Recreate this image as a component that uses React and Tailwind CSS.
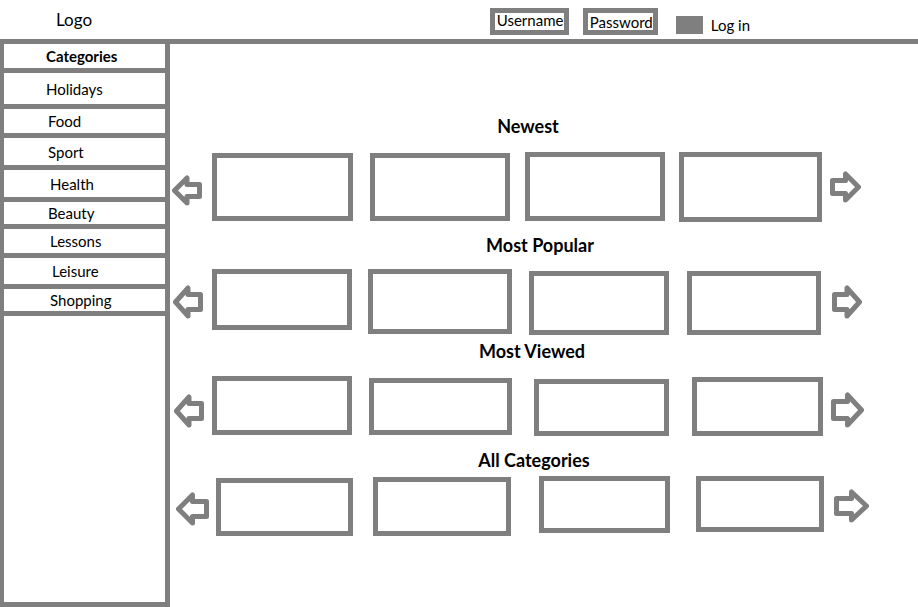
const categories = [
  { name: "Holidays", row: "h-9 pl-[42px]" },
  { name: "Food", row: "h-[29px] pl-11" },
  { name: "Sport", row: "h-8 pl-11" },
  { name: "Health", row: "h-8 pl-[46px]" },
  { name: "Beauty", row: "h-[27px] pl-11" },
  { name: "Lessons", row: "h-[29px] pl-[46px]" },
  { name: "Leisure", row: "h-[31px] pl-12" },
  { name: "Shopping", row: "h-[27px] pl-[46px]" },
];

const sections = [
  {
    title: "Newest",
    heading: "mb-3.5 pr-8",
    row: "h-[70px] grid-cols-[2fr_30fr_10fr_141fr_17fr_140fr_15fr_140fr_14fr_143fr_8fr_31fr_57fr]",
    cards: ["h-[68px]", "h-[68px]", "h-[69px] self-start", "h-[70px]"],
    left: { width: 30, height: 31, place: "self-end pb-4" },
    right: { width: 31, height: 32, place: "self-center" },
  },
  {
    title: "Most Popular",
    heading: "mt-[11px] mb-3 pr-2",
    row: "h-[66px] grid-cols-[3fr_30fr_9fr_140fr_16fr_144fr_17fr_140fr_18fr_134fr_11fr_30fr_56fr]",
    cards: ["h-[61px] self-start", "h-[65px] self-start", "h-[64px] self-end", "h-[64px] self-end"],
    left: { width: 30, height: 34, place: "self-center" },
    right: { width: 30, height: 34, place: "self-center" },
  },
  {
    title: "Most Viewed",
    heading: "mt-1 mb-[13px] pr-6",
    row: "h-[60px] grid-cols-[4fr_30fr_8fr_140fr_17fr_143fr_22fr_135fr_23fr_131fr_8fr_33fr_54fr]",
    cards: ["h-[59px] self-start", "h-[57px]", "h-[57px] self-end", "h-[59px] self-end"],
    left: { width: 30, height: 34, place: "self-end pb-2" },
    right: { width: 33, height: 36, place: "self-end pb-2" },
  },
  {
    title: "All Categories",
    heading: "mt-3 mb-1 pr-5",
    row: "h-[60px] grid-cols-[6fr_33fr_7fr_137fr_20fr_138fr_28fr_131fr_26fr_128fr_10fr_35fr_49fr]",
    cards: ["h-[58px] self-end", "h-[59px] self-end", "h-[57px] self-start", "h-[56px] self-start"],
    left: { width: 33, height: 34, place: "self-end pb-2.5" },
    right: { width: 35, height: 34, place: "self-center" },
  },
];

const cardColumns = ["col-start-4", "col-start-6", "col-start-8", "col-start-10"];

function Arrow({ direction, width, height }) {
  const neck = width / 2;
  const d = `M2.5 ${height / 2} L${neck} 3 V9.5 H${width - 2.5} V${height - 9.5} H${neck} V${height - 3} Z`;
  return (
    <svg
      width={width}
      height={height}
      viewBox={`0 0 ${width} ${height}`}
      className={direction === "right" ? "block -scale-x-100" : "block"}
      fill="none"
      stroke="#7f7f7f"
      strokeWidth="5"
      strokeLinejoin="round"
      aria-hidden="true"
    >
      <path d={d} />
    </svg>
  );
}

function Carousel({ title, heading, row, cards, left, right }) {
  return (
    <section>
      <h2 className={`text-center text-lg leading-6 font-bold ${heading}`}>{title}</h2>
      <div className={`grid grid-rows-1 items-center ${row}`}>
        <button type="button" aria-label={`Previous in ${title}`} className={`col-start-2 row-start-1 ${left.place}`}>
          <Arrow direction="left" width={left.width} height={left.height} />
        </button>
        {cards.map((card, i) => (
          <div key={i} className={`row-start-1 border-5 border-[#7f7f7f] ${cardColumns[i]} ${card}`} />
        ))}
        <button type="button" aria-label={`Next in ${title}`} className={`col-start-12 row-start-1 ${right.place}`}>
          <Arrow direction="right" width={right.width} height={right.height} />
        </button>
      </div>
    </section>
  );
}

export default function App() {
  return (
    <div className="flex min-h-screen flex-col bg-white font-[Lato,Carlito,sans-serif] text-[15px] text-black">
      <header className="flex h-11 items-start border-b-5 border-[#7f7f7f] pr-[168px] pl-14">
        <a href="#" className="pt-2 text-[17px] leading-6">
          Logo
        </a>
        <form className="ml-auto flex pt-2">
          <input
            type="text"
            aria-label="Username"
            placeholder="Username"
            className="h-[27px] w-[79px] border-5 border-[#7f7f7f] pb-1 pl-0.5 leading-4 outline-none placeholder:text-black"
          />
          <input
            type="password"
            aria-label="Password"
            placeholder="Password"
            className="ml-3.5 h-[27px] w-[75px] border-5 border-[#7f7f7f] pl-0.5 leading-4 outline-none placeholder:text-black"
          />
          <button type="button" className="ml-[18px] flex items-center gap-2 pt-1.5 leading-5">
            <span className="h-[18px] w-[27px] bg-[#7f7f7f]" />
            Log in
          </button>
        </form>
      </header>
      <div className="flex flex-1">
        <nav className="w-[170px] shrink-0 border-r-5 border-b-5 border-l-4 border-[#7f7f7f]">
          <h2 className="flex h-[29px] items-center border-b-5 border-[#7f7f7f] pl-[42px] leading-5 font-bold">Categories</h2>
          <ul>
            {categories.map(({ name, row }) => (
              <li key={name} className={`flex items-center border-b-5 border-[#7f7f7f] ${row}`}>
                <a href="#" className="leading-5">
                  {name}
                </a>
              </li>
            ))}
          </ul>
        </nav>
        <main className="min-w-0 flex-1 pt-[70px]">
          {sections.map((section) => (
            <Carousel key={section.title} {...section} />
          ))}
        </main>
      </div>
    </div>
  );
}
